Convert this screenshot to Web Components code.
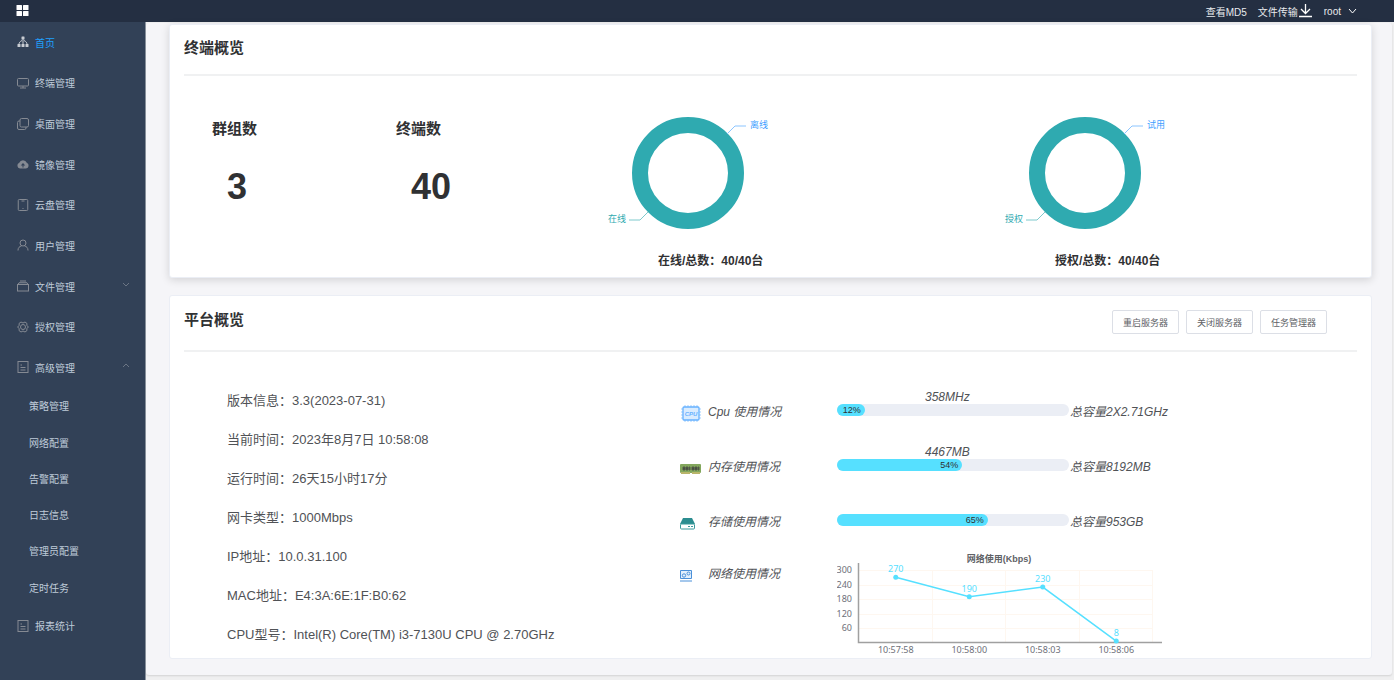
<!DOCTYPE html>
<html lang="zh-CN">
<head>
<meta charset="UTF-8">
<meta name="viewport" content="width=device-width, initial-scale=1">
<title>首页</title>
<style>
    body {
        margin: 0;
        background: #fff;
        color: #303133;
        font-family: "Liberation Sans", Arial, "Noto Sans CJK SC", sans-serif;
        font-size: 12px;
    }
</style>
</head>
<body>
<admin-app></admin-app>

<script>
// Line icons for the side menu, all on a 24x24 grid
const ICONS = {
    home: '<g fill="currentColor" stroke="none"><rect x="9" y="1" width="6" height="6" rx="1"/><rect x="1" y="16" width="6" height="6" rx="1"/><rect x="9" y="16" width="6" height="6" rx="1"/><rect x="17" y="16" width="6" height="6" rx="1"/></g><path d="M12 6v11M10 9C6 11 4 13 4 17M14 9c4 2 6 4 6 8"/>',
    monitor: '<rect x="1" y="3" width="22" height="15" rx="2"/><path d="M12 18v4M6 22h12"/>',
    copy: '<rect x="6" y="1" width="17" height="17" rx="3"/><path d="M6 6H4a3 3 0 0 0-3 3v11a3 3 0 0 0 3 3h11a3 3 0 0 0 3-3v-2"/>',
    cloud: '<path fill="currentColor" stroke="none" fill-rule="evenodd" d="M6 21a6 6 0 0 1-1.500-11.500 8 8 0 0 1 15 0A6 6 0 0 1 18 21zM12 10l-4.500 5H11v4h2v-4h3.500z"/>',
    phone: '<rect x="2.500" y="1" width="19" height="22" rx="2"/><path d="M9 4h6M11 19h2"/>',
    user: '<circle cx="12" cy="8" r="6"/><path d="M2 23c0-6 3-8 7-9M22 23c0-6-3-8-7-9"/>',
    folder: '<rect x="1" y="9" width="22" height="13"/><path d="M4 5.500h16M6 2h12M4 5.500L2 9M20 5.500L22 9"/>',
    setting: '<path d="M8 2l4 2 4-2 4 3-.5 4L23 12l-3.500 3 .5 4-4 3-4-2-4 2-4-3 .5-4L1 12l3.500-3L4 5z"/><circle cx="12" cy="12" r="5"/>',
    document: '<rect x="2" y="1" width="20" height="22"/><path d="M7 8h3M7 13h10M7 18h10"/>'
};

class AdminApp extends HTMLElement {
    constructor() {
        super();
        this.attachShadow({ mode: 'open' });
    }

    connectedCallback() {
        this.shadowRoot.innerHTML = `
            <style>
                :host {
                    display: grid;
                    grid-template-columns: 145px minmax(0, 1fr);
                    grid-template-rows: 22px 1fr;
                    min-height: 100vh;
                    padding-bottom: 20px;
                    box-sizing: border-box;
                }

                app-header {
                    grid-column: 1 / -1;
                }

                main {
                    background: #efeff0;
                    border-left: 1px solid #8c95a1;
                    padding: 1px 2px 5px 0;
                    display: flex;
                }

                .content {
                    flex: 1;
                    min-width: 0;
                    display: flex;
                    flex-direction: column;
                    gap: 17px;
                    padding: 1px 20px 16px 23px;
                    background: #f5f5f8;
                    border-radius: 3px;
                    box-shadow: 0 1px 2px rgba(0, 0, 0, 0.12);
                }

                .stats {
                    display: grid;
                    grid-template-columns: 184fr 213fr 397fr 379fr;
                }

                .platform {
                    display: grid;
                    grid-template-columns: 496fr 677fr;
                    padding-bottom: 3px;
                }

                .usage {
                    padding-top: 33px;
                }
            </style>
            <app-header></app-header>
            <side-menu></side-menu>
            <main>
                <div class="content">
                    <panel-card heading="终端概览" raised>
                        <div class="stats">
                            <stat-number label="群组数">3</stat-number>
                            <stat-number label="终端数">40</stat-number>
                            <ring-chart major="在线" minor="离线">在线/总数：40/40台</ring-chart>
                            <ring-chart major="授权" minor="试用">授权/总数：40/40台</ring-chart>
                        </div>
                    </panel-card>
                    <panel-card heading="平台概览" tall>
                        <plain-button slot="actions">重启服务器</plain-button>
                        <plain-button slot="actions">关闭服务器</plain-button>
                        <plain-button slot="actions">任务管理器</plain-button>
                        <div class="platform">
                            <info-list></info-list>
                            <div class="usage">
                                <usage-row label="Cpu 使用情况" value="358MHz" percent="12" total="总容量2X2.71GHz">
                                    <svg slot="icon" width="22" height="18" viewBox="0 0 22 18">
                                        <path d="M5 0v17M8 0v17M11 0v17M14 0v17M17 0v17M1 4h20M1 7h20M1 10h20M1 13h20" stroke="#a0cfff"/>
                                        <rect x="3" y="2" width="16" height="13" rx="1" fill="#d9ecff" stroke="#66b1ff" stroke-width="1.300"/>
                                        <text x="11" y="11" text-anchor="middle" font-size="6" font-weight="bold" fill="#66b1ff">CPU</text>
                                    </svg>
                                </usage-row>
                                <usage-row label="内存使用情况" value="4467MB" percent="54" total="总容量8192MB">
                                    <svg slot="icon" width="22" height="10" viewBox="0 0 22 10">
                                        <rect width="21" height="9" rx="1" fill="#83a75d"/>
                                        <path d="M1 9h9M12 9h8" stroke="#b9b56a" stroke-width="2"/>
                                        <path d="M3 3h2v3H3zM6 3h2v3H6zM9 3h1v3H9zM12 3h2v3h-2zM15 3h2v3h-2zM18 3h1v3h-1z" fill="#3c403c" stroke="#555e4b"/>
                                    </svg>
                                </usage-row>
                                <usage-row label="存储使用情况" percent="65" total="总容量953GB">
                                    <svg slot="icon" width="16" height="12" viewBox="0 0 16 12">
                                        <path d="M3 0h9l3 6H0z" fill="#2c8d90"/>
                                        <rect x="0.500" y="6" width="14" height="5" rx="1" fill="#fff" stroke="#3b999b"/>
                                        <path d="M8 8.500h2M11 8.500h2" stroke="#3b999b"/>
                                    </svg>
                                </usage-row>
                                <usage-row label="网络使用情况" chart>
                                    <svg slot="icon" width="13" height="12" viewBox="0 0 13 12" fill="#e3f0fc" stroke="#4a90d9">
                                        <path d="M0.500 0.500h11v8h-11zM0 11h12"/>
                                        <circle cx="4" cy="5.500" r="1.700"/>
                                        <circle cx="8.500" cy="3.500" r="1.500"/>
                                    </svg>
                                    <line-chart></line-chart>
                                </usage-row>
                            </div>
                        </div>
                    </panel-card>
                </div>
            </main>
        `;
    }
}

class AppHeader extends HTMLElement {
    constructor() {
        super();
        this.attachShadow({ mode: 'open' });
        this.shadowRoot.innerHTML = `
            <style>
                :host {
                    display: flex;
                    align-items: center;
                    justify-content: space-between;
                    padding: 0 37px 0 16px;
                    background: #242f42;
                    color: #fff;
                    font-size: 10px;
                }

                svg {
                    display: block;
                }

                nav {
                    display: flex;
                    align-items: center;
                    gap: 11px;
                }

                a, button {
                    display: flex;
                    align-items: center;
                    color: #e8eaed;
                    text-decoration: none;
                }

                button {
                    gap: 7px;
                    padding: 0;
                    border: 0;
                    background: none;
                    font: inherit;
                    cursor: pointer;
                }

                .collapse {
                    color: #fff;
                }
            </style>
            <button class="collapse" aria-label="折叠菜单">
                <svg width="13" height="12" viewBox="0 0 13 12" fill="currentColor">
                    <rect x="0.500" width="5.500" height="5" rx="0.500"/><rect x="7" width="5.500" height="5" rx="0.500"/>
                    <rect x="0.500" y="6" width="5.500" height="5" rx="0.500"/><rect x="7" y="6" width="5.500" height="5" rx="0.500"/>
                </svg>
            </button>
            <nav>
                <a href="#md5">查看MD5</a>
                <a href="#transfer">文件传输
                    <svg width="15" height="14" viewBox="0 0 15 14" fill="none" stroke="#fff" stroke-width="1.300">
                        <path d="M7.500 0v9M3 5l4.500 4.500L12 5M1 12.500h13"/>
                    </svg>
                </a>
                <button>root
                    <svg width="9" height="6" viewBox="0 0 9 6" fill="none" stroke="#fff">
                        <path d="M1 1l3.500 4L8 1"/>
                    </svg>
                </button>
            </nav>
        `;
    }
}

class SideMenu extends HTMLElement {
    constructor() {
        super();
        this.attachShadow({ mode: 'open' });
        this.shadowRoot.innerHTML = `
            <style>
                :host {
                    display: flex;
                    background: #324157;
                }

                nav {
                    flex: 1;
                    display: flex;
                    flex-direction: column;
                    padding-bottom: 34px;
                }
            </style>
            <nav>
                <menu-item icon="home" active>首页</menu-item>
                <menu-item icon="monitor">终端管理</menu-item>
                <menu-item icon="copy">桌面管理</menu-item>
                <menu-item icon="cloud">镜像管理</menu-item>
                <menu-item icon="phone">云盘管理</menu-item>
                <menu-item icon="user">用户管理</menu-item>
                <menu-item icon="folder" arrow="down">文件管理</menu-item>
                <menu-item icon="setting">授权管理</menu-item>
                <menu-item icon="document" arrow="up">高级管理</menu-item>
                <menu-item sub>策略管理</menu-item>
                <menu-item sub>网络配置</menu-item>
                <menu-item sub>告警配置</menu-item>
                <menu-item sub>日志信息</menu-item>
                <menu-item sub>管理员配置</menu-item>
                <menu-item sub>定时任务</menu-item>
                <menu-item icon="document">报表统计</menu-item>
            </nav>
        `;
    }
}

class MenuItem extends HTMLElement {
    constructor() {
        super();
        this.attachShadow({ mode: 'open' });
    }

    connectedCallback() {
        const icon = ICONS[this.getAttribute('icon')];
        const arrow = this.getAttribute('arrow');
        const arrowPath = arrow === 'up' ? 'M1 4l3-3 3 3' : 'M1 1l3 3 3-3';

        this.shadowRoot.innerHTML = `
            <style>
                /* top level and sub items share the height 56 : 50 */
                :host {
                    display: flex;
                    flex: 56 1 0;
                    font-size: 10px;
                }

                :host([sub]) {
                    flex-grow: 50;
                }

                a {
                    flex: 1;
                    display: flex;
                    align-items: center;
                    gap: 6px;
                    padding: 0 15px 0 17px;
                    color: #bfcbd9;
                    text-decoration: none;
                }

                :host([sub]) a {
                    padding-left: 29px;
                }

                :host([active]) a {
                    color: #20a0ff;
                }

                .icon {
                    color: #858a93;
                }

                :host([active]) .icon {
                    color: #c8ccd2;
                }

                .arrow {
                    margin-left: auto;
                    margin-bottom: 3px;
                    color: #6b7584;
                }
            </style>
            <a href="#">
                ${icon ? `<svg class="icon" width="12" height="12" viewBox="0 0 24 24" fill="none" stroke="currentColor" stroke-width="2">${icon}</svg>` : ''}
                <slot></slot>
                ${arrow ? `<svg class="arrow" width="8" height="5" viewBox="0 0 8 5" fill="none" stroke="currentColor">
                    <path d="${arrowPath}"/></svg>` : ''}
            </a>
        `;
    }
}

class PanelCard extends HTMLElement {
    constructor() {
        super();
        this.attachShadow({ mode: 'open' });
    }

    connectedCallback() {
        this.shadowRoot.innerHTML = `
            <style>
                :host {
                    display: block;
                    padding: 0 14px;
                    background: #fff;
                    border: 1px solid #ebeef5;
                    border-radius: 3px;
                }

                :host([raised]) {
                    box-shadow: 0 2px 9px rgba(0, 0, 0, 0.14);
                }

                header {
                    display: flex;
                    align-items: flex-start;
                    justify-content: space-between;
                    height: 37px;
                    padding-top: 12px;
                    border-bottom: 2px solid #f0f1f2;
                }

                :host([tall]) header {
                    height: 41px;
                    padding-top: 13px;
                }

                h2 {
                    margin: 0;
                    font-size: 15px;
                    line-height: 22px;
                }

                .actions {
                    display: flex;
                    gap: 7px;
                    padding: 1px 30px 0 0;
                }
            </style>
            <header>
                <h2>${this.getAttribute('heading')}</h2>
                <div class="actions"><slot name="actions"></slot></div>
            </header>
            <slot></slot>
        `;
    }
}

class PlainButton extends HTMLElement {
    constructor() {
        super();
        this.attachShadow({ mode: 'open' });
        this.shadowRoot.innerHTML = `
            <style>
                :host {
                    display: block;
                }

                button {
                    display: block;
                    height: 24px;
                    padding: 0 10px;
                    border: 1px solid #dcdfe6;
                    border-radius: 2px;
                    background: #fff;
                    color: #606266;
                    font-family: inherit;
                    font-size: 9px;
                    cursor: pointer;
                }

                button:hover {
                    color: #409eff;
                    border-color: #c6e2ff;
                }
            </style>
            <button><slot></slot></button>
        `;
    }
}

class StatNumber extends HTMLElement {
    constructor() {
        super();
        this.attachShadow({ mode: 'open' });
    }

    connectedCallback() {
        this.shadowRoot.innerHTML = `
            <style>
                :host {
                    display: block;
                    padding: 41px 0 0 28px;
                    font-weight: bold;
                }

                .label {
                    font-size: 15px;
                    line-height: 23px;
                }

                .value {
                    margin-top: 23px;
                    padding-left: 15px;
                    font-size: 36px;
                    line-height: 48px;
                }
            </style>
            <div class="label">${this.getAttribute('label')}</div>
            <div class="value"><slot></slot></div>
        `;
    }
}

class RingChart extends HTMLElement {
    constructor() {
        super();
        this.attachShadow({ mode: 'open' });
    }

    connectedCallback() {
        this.shadowRoot.innerHTML = `
            <style>
                :host {
                    display: block;
                    padding-top: 26px;
                }

                svg {
                    display: block;
                    font-size: 9px;
                }

                .caption {
                    padding-left: 77px;
                    font-weight: bold;
                    line-height: 32px;
                }
            </style>
            <svg width="214" height="143" viewBox="0 0 214 143" fill="none">
                <circle cx="107" cy="71" r="48" stroke="#2faab0" stroke-width="16"/>
                <path d="M146 32l8-8h11" stroke="#8cc5ff"/>
                <path d="M67 110l-8 8H48" stroke="#7fcacd"/>
                <text x="169" y="26" fill="#409eff">${this.getAttribute('minor')}</text>
                <text x="45" y="120" text-anchor="end" fill="#2faab0">${this.getAttribute('major')}</text>
            </svg>
            <div class="caption"><slot></slot></div>
        `;
    }
}

class InfoList extends HTMLElement {
    constructor() {
        super();
        this.attachShadow({ mode: 'open' });
    }

    connectedCallback() {
        const rows = [
            '版本信息：3.3(2023-07-31)',
            '当前时间：2023年8月7日 10:58:08',
            '运行时间：26天15小时17分',
            '网卡类型：1000Mbps',
            'IP地址：10.0.31.100',
            'MAC地址：E4:3A:6E:1F:B0:62',
            'CPU型号：Intel(R) Core(TM) i3-7130U CPU @ 2.70GHz'
        ];

        this.shadowRoot.innerHTML = `
            <style>
                :host {
                    display: block;
                    padding: 29px 0 0 43px;
                    color: #505256;
                    font-size: 13px;
                    line-height: 39px;
                }
            </style>
            ${rows.map(row => `<div>${row}</div>`).join('')}
        `;
    }
}

class UsageRow extends HTMLElement {
    constructor() {
        super();
        this.attachShadow({ mode: 'open' });
    }

    connectedCallback() {
        const percent = this.getAttribute('percent');
        const label = this.getAttribute('label');

        this.shadowRoot.innerHTML = `
            <style>
                :host {
                    display: grid;
                    grid-template-columns: 28px 129px minmax(0, 232fr) minmax(0, 288fr);
                    height: 55px;
                    color: #505256;
                    font-style: italic;
                    line-height: 55px;
                }

                :host([chart]) {
                    grid-template-columns: 28px 129px minmax(0, 1fr);
                    height: 105px;
                    line-height: 49px;
                }

                .icon {
                    display: flex;
                    align-items: center;
                    height: 57px;
                }

                :host([chart]) .icon {
                    height: 51px;
                }

                .value {
                    height: 14px;
                    padding: 5px 0 0 88px;
                    line-height: 14px;
                }

                .track {
                    height: 12px;
                    border-radius: 6px;
                    background: #ebeef5;
                }

                .fill {
                    height: 12px;
                    border-radius: 6px;
                    background: #56e0ff;
                    box-sizing: border-box;
                    padding-right: 4px;
                    color: #303133;
                    font-size: 9px;
                    font-style: normal;
                    line-height: 12px;
                    text-align: right;
                }

                .total {
                    padding-left: 1px;
                }
            </style>
            <div class="icon"><slot name="icon"></slot></div>
            <div>${label}</div>
            ${percent ? `
                <div>
                    <div class="value">${this.getAttribute('value') || ''}</div>
                    <div class="track" role="progressbar" aria-label="${label}" aria-valuenow="${percent}">
                        <div class="fill" style="width: ${percent}%">${percent}%</div>
                    </div>
                </div>
                <div class="total">${this.getAttribute('total')}</div>
            ` : '<slot></slot>'}
        `;
    }
}

class LineChart extends HTMLElement {
    constructor() {
        super();
        this.attachShadow({ mode: 'open' });
    }

    connectedCallback() {
        const data = [
            { time: '10:57:58', value: 270 },
            { time: '10:58:00', value: 190 },
            { time: '10:58:03', value: 230 },
            { time: '10:58:06', value: 8 }
        ];
        const left = 22;
        const bottom = 93;
        const step = 73.5;
        const x = i => left + step * (i + 0.5);
        const y = value => bottom - value * 73 / 300;

        let grid = '';
        let labels = '';
        for (let v = 60; v <= 300; v += 60) {
            grid += `<path d="M${left} ${Math.round(y(v)) + 0.5}h294"/>`;
            labels += `<text x="15" y="${Math.round(y(v)) + 3}" text-anchor="end">${v}</text>`;
        }
        data.forEach((d, i) => {
            grid += `<path d="M${Math.round(left + step * (i + 1)) - 0.5} 20v73"/>`;
            labels += `<text x="${x(i)}" y="103" text-anchor="middle">${d.time}</text>`;
        });

        this.shadowRoot.innerHTML = `
            <style>
                :host {
                    display: block;
                    font-family: "Noto Sans", "Noto Sans CJK SC", sans-serif;
                    font-size: 9px;
                    font-style: normal;
                    line-height: normal;
                }

                svg {
                    display: block;
                }

                .title {
                    font-family: "Liberation Sans", "Noto Sans CJK SC", sans-serif;
                    font-weight: bold;
                }
            </style>
            <svg width="330" height="105" viewBox="0 0 330 105" fill="none">
                <g stroke="#fef7f0">${grid}</g>
                <path d="M21.500 13v79.500H325" stroke="#a0a0a0" stroke-width="1.500"/>
                <g fill="#6e7079">${labels}</g>
                <text class="title" x="162" y="12" text-anchor="middle" fill="#606266">网络使用(Kbps)</text>
                <polyline points="${data.map((d, i) => `${x(i)},${y(d.value)}`).join(' ')}" stroke="#56e0ff" stroke-width="1.500"/>
                <g fill="#56e0ff">
                    ${data.map((d, i) => `<circle cx="${x(i)}" cy="${y(d.value)}" r="2.500"/><text x="${x(i)}" y="${y(d.value) - 5}" text-anchor="middle">${d.value}</text>`).join('')}
                </g>
            </svg>
        `;
    }
}

customElements.define('plain-button', PlainButton);
customElements.define('stat-number', StatNumber);
customElements.define('ring-chart', RingChart);
customElements.define('info-list', InfoList);
customElements.define('line-chart', LineChart);
customElements.define('usage-row', UsageRow);
customElements.define('panel-card', PanelCard);
customElements.define('menu-item', MenuItem);
customElements.define('side-menu', SideMenu);
customElements.define('app-header', AppHeader);
customElements.define('admin-app', AdminApp);
</script>
</body>
</html>
